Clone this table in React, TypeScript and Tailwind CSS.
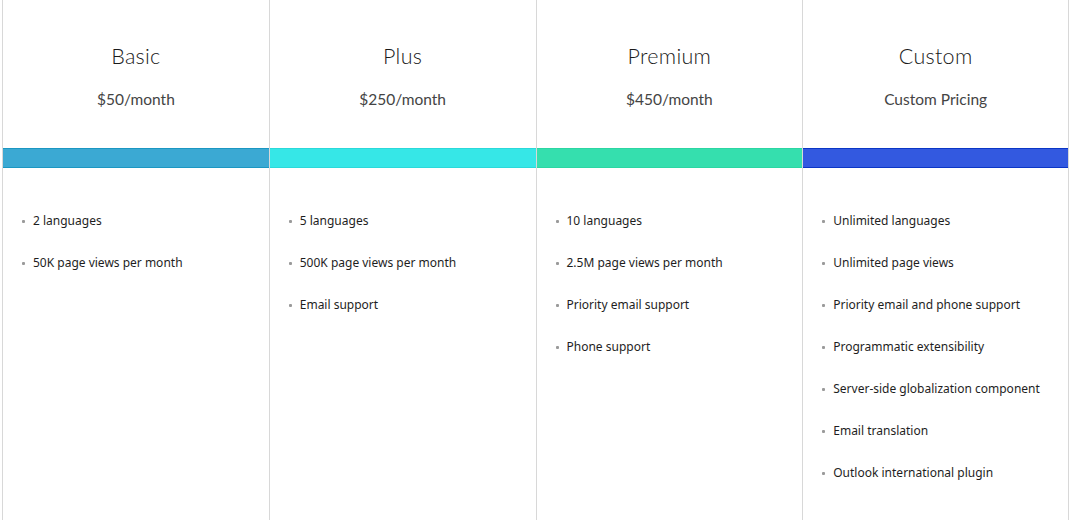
import React from 'react';

type Plan = {
  name: string;
  price: string;
  bar: string;
  features: string[];
};

const plans: Plan[] = [
  {
    name: 'Basic',
    price: '$50/month',
    bar: 'bg-[#3ba9d3] border-[#1b97c2]',
    features: ['2 languages', '50K page views per month'],
  },
  {
    name: 'Plus',
    price: '$250/month',
    bar: 'bg-[#36e7e7] border-[#2bd9da]',
    features: ['5 languages', '500K page views per month', 'Email support'],
  },
  {
    name: 'Premium',
    price: '$450/month',
    bar: 'bg-[#35dfae] border-[#2cd6a3]',
    features: ['10 languages', '2.5M page views per month', 'Priority email support', 'Phone support'],
  },
  {
    name: 'Custom',
    price: 'Custom Pricing',
    bar: 'bg-[#3359e0] border-[#0b36c6]',
    features: [
      'Unlimited languages',
      'Unlimited page views',
      'Priority email and phone support',
      'Programmatic extensibility',
      'Server-side globalization component',
      'Email translation',
      'Outlook international plugin',
    ],
  },
];

function PlanColumn({ plan, last }: { plan: Plan; last: boolean }) {
  return (
    <div className={'flex flex-col border-l border-[#d8d8d8] ' + (last ? 'border-r' : '')}>
      <div className="h-[148px] flex flex-col items-center pt-[41px] font-['Lato',sans-serif]">
        <h2 className="text-[21.5px] leading-[30px] font-light tracking-[0.3px] text-[#1a1a1a]">{plan.name}</h2>
        <p className="mt-[17px] text-[15.5px] leading-[22px] text-[#444]">{plan.price}</p>
      </div>
      <div className={'h-[20px] border-y ' + plan.bar} />
      <ul className="pt-[32px] pl-[19px] font-['Noto_Sans',sans-serif] text-[12px] text-[#1e1e1e]">
        {plan.features.map((f) => (
          <li key={f} className="h-[42px] flex items-center whitespace-nowrap">
            <span className="w-[3px] h-[3px] rounded-[1px] bg-[#9a9a9a] mr-[8px] shrink-0" />
            <span>{f}</span>
          </li>
        ))}
      </ul>
    </div>
  );
}

export default function App() {
  return (
    <div className="w-[1070px] h-[520px] bg-white overflow-hidden">
      <div className="ml-[2px] w-[1067px] h-[520px] grid grid-cols-4">
        {plans.map((p, i) => (
          <PlanColumn key={p.name} plan={p} last={i === plans.length - 1} />
        ))}
      </div>
    </div>
  );
}
